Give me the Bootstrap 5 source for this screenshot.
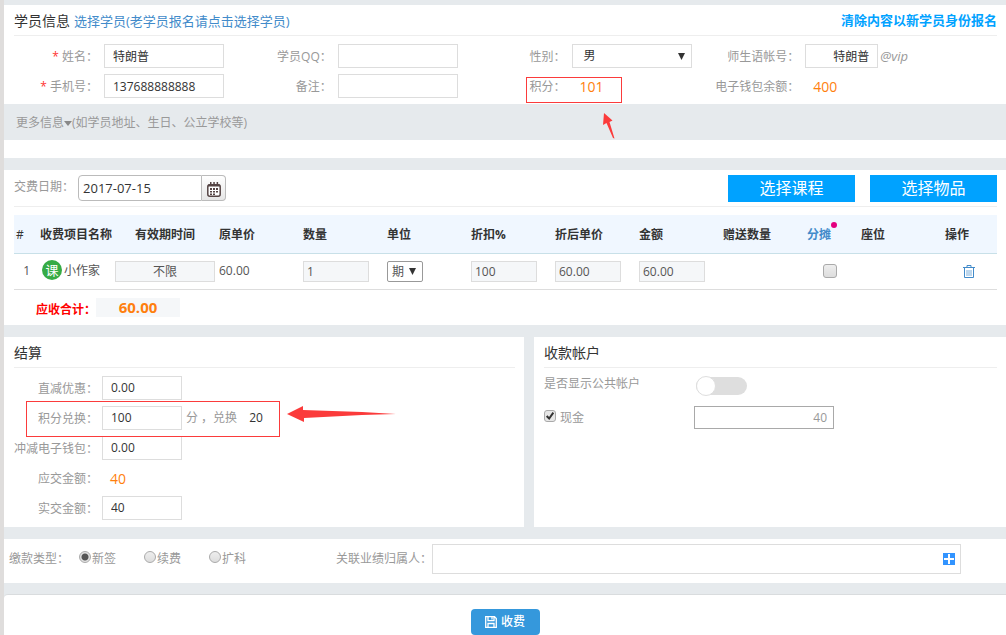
<!DOCTYPE html>
<html lang="zh-CN">
<head>
<meta charset="utf-8">
<meta name="viewport" content="width=device-width, initial-scale=1">
<title>学员收费</title>
<link rel="stylesheet" href="https://cdn.jsdelivr.net/npm/bootstrap@5.3.0/dist/css/bootstrap.min.css">
<style>
  :root { --muted: #999; --line: #ddd; --rule: #eee; --orange: #ff7f0e; --mark-red: #fb3b3b; }
  body { font: 12px/24px "Open Sans", "Noto Sans CJK SC", sans-serif; color: var(--muted); background: #e6eaed; border-left: 4px solid #dfdddc; }
  main { padding-top: 5px; }
  a { text-decoration: none; color: #428bca; }
  .pane { background: #fff; padding: 0 9px 0 10px; }
  .pane-head { height: 31px; border-bottom: 1px solid var(--rule); line-height: 30px; }
  .pane-title { font-size: 14px; line-height: 32px; color: #333; font-weight: 400; margin: 0; }
  .pick { font-size: 13px; line-height: 32px; }
  .reset-link { font-size: 13px; font-weight: 700; color: #00a2ff; }
  .field { display: flex; align-items: flex-start; height: 30px; position: relative; }
  .field > label, .field > .cap { width: 84px; margin-right: 6px; text-align: right; white-space: nowrap; flex: none; line-height: 26px; }
  .req { color: #f33; }
  .box { height: 24px; width: 120px; border: 1px solid var(--line); border-radius: 0; padding: 0 8px; font-size: 12px; line-height: 22px; color: #333; background-color: #fff; }
  .drop { appearance: none; background: #fff url("data:image/svg+xml,%3Csvg xmlns='http://www.w3.org/2000/svg' width='7' height='7'%3E%3Cpath d='M0 0h7L3.5 7z' fill='%23333'/%3E%3C/svg%3E") no-repeat right 6px center; }
  .user-box { width: 73px; }
  .amount { font-size: 14px; line-height: 26px; color: var(--orange); }
  .vip { font-size: 13px; margin-left: 2px; }
  .outline { position: absolute; border: 1px solid var(--mark-red); pointer-events: none; z-index: 2; }
  .pointer { position: absolute; fill: var(--mark-red); z-index: 2; }
  .more { height: 36px; line-height: 38px; padding-left: 12px; }
  .more-body { height: 18px; margin-bottom: 12px; background: #fff; }
  .caret { display: inline-block; border: 4px solid transparent; border-top: 5px solid #888; border-bottom: 0; vertical-align: 1px; }
  .date-row { height: 37px; padding-top: 5px; border-bottom: 1px solid var(--rule); }
  .date-group { width: 148px; height: 26px; }
  .date-group .box { height: 26px; font-size: 13px; padding: 0 4px; border: 1px solid #bbb; border-radius: 4px 0 0 4px; min-width: 0; flex: 1; }
  .date-group button { width: 24px; padding: 3px 0 0; border: 1px solid #bbb; border-left: 0; border-radius: 0 4px 4px 0; background: linear-gradient(#fff, #e6e6e6); line-height: 0; }
  .picks { gap: 15px; }
  .btn-pick { width: 127px; height: 27px; padding: 0; font-size: 16px; line-height: 27px; border: 0; border-radius: 0; background: #00a2ff; color: #fff; }
  .fees { table-layout: fixed; width: 100%; color: #555; }
  .fees th { height: 38px; padding: 2px 4px 0; background: #f0f7ff; border-bottom: 1px solid #c8e0e8; color: #333; font-weight: 700; white-space: nowrap; }
  .fees td { height: 36px; padding: 0 4px; border-bottom: 1px solid var(--line); white-space: nowrap; }
  .fees .box { height: 21px; width: 66px; padding: 0 3px; line-height: 19px; background-color: #f5f7f9; color: #555; display: block; }
  .fees .drop { width: 36px; padding: 0 4px; border-color: #999; border-radius: 2px; background-color: #fff; }
  .fees th.num { padding: 2px 2px 0; font-weight: 400; }
  .fees td.num { padding: 0 6px 0 0; }
  .split { position: relative; }
  .dot { position: absolute; left: 24px; top: -1px; width: 6px; height: 6px; border-radius: 50%; background: #e4007f; }
  .course { display: inline-block; width: 20px; height: 20px; margin: 0 2px; border-radius: 50%; background: #36ab45; color: #fff; font-size: 13px; line-height: 20px; text-align: center; }
  .sum { height: 35px; padding: 8px 0 0 22px; }
  .sum-label { width: 60px; color: #f00; font-weight: 700; }
  .sum-value { width: 84px; background: #f5f7f9; font-size: 15px; font-weight: 700; line-height: 19px; color: var(--orange); text-align: center; }
  .tick { appearance: none; margin: 0; border: 1px solid #aaa; background: linear-gradient(#eee, #ddd) center; flex: none; }
  .tick[type=checkbox] { width: 14px; height: 14px; border-radius: 3px; }
  .tick[type=radio] { width: 12px; height: 12px; border-radius: 50%; }
  .tick[type=checkbox]:checked { width: 12px; height: 12px; background: url("data:image/svg+xml,%3Csvg xmlns='http://www.w3.org/2000/svg' viewBox='0 0 12 12'%3E%3Cpath d='M2 6l3 3 5-7' fill='none' stroke='%23333' stroke-width='2.4'/%3E%3C/svg%3E") center, #e6e6e6; }
  .tick[type=radio]:checked { background: radial-gradient(#555 0 3px, #e2e2e2 4px); }
  .panels { gap: 10px; margin: 12px 0; }
  .panel-left { flex: 522 1 0; height: 190px; }
  .panel-right { flex: 472 1 0; }
  .panel-left .field > label, .panel-left .field > .cap { margin-right: 4px; }
  .panel-left .box { width: 80px; }
  .swap { margin-left: 12px; color: #333; }
  .acct-cap { width: 150px; }
  .acct-row { height: 30px; padding-top: 4px; }
  .toggle { appearance: none; width: 51px; height: 18px; margin: 5px 0 0 2px; border-radius: 9px; position: relative; background: #dedede; }
  .toggle::before { content: ""; position: absolute; left: 0; top: -1px; width: 20px; height: 20px; border: 1px solid #dedede; border-radius: 50%; background: #fff; }
  .acct-box { width: 140px; height: 23px; border-color: #a9a9a9; color: var(--muted); text-align: right; padding: 0 6px; }
  .cash { gap: 4px; }
  .cash .tick { margin-top: 4px; }
  .kinds { height: 44px; padding: 5px 5px 0; margin-bottom: 11px; line-height: 30px; }
  .kind-cap { width: 70px; }
  .kind { width: 65px; gap: 1px; }
  .kind .tick { margin-top: 7px; }
  .owner-cap { margin-left: auto; }
  .owner { width: 529px; height: 30px; margin-right: 40px; border: 1px solid var(--line); }
  .owner input { border: 0; outline: 0; min-width: 0; background: none; }
  .owner button { border: 0; background: none; padding: 0; margin-right: 5px; line-height: 0; }
  .foot { border-top: 1px solid #d9dcde; padding-top: 14px; background: #fff; height: 41px; line-height: 0; border-top-left-radius: 4px; }
  .btn-pay { height: 26px; width: 69px; padding: 0; font-size: 12px; font-weight: 500; line-height: 26px; border: 0; border-radius: 4px; background: #3598dc; color: #fff; }
</style>
</head>
<body>
<main>
  <section class="pane">
    <div class="pane-head d-flex justify-content-between">
      <div class="d-flex gap-1"><h2 class="pane-title">学员信息</h2><a class="pick" href="#">选择学员(老学员报名请点击选择学员)</a></div>
      <a class="reset-link" href="#">清除内容以新学员身份报名</a>
    </div>
    <div class="row row-cols-4 g-0 pt-2 pe-5">
      <div class="field"><label for="name"><span class="req">*</span> 姓名：</label><input class="box" id="name" value="特朗普"></div>
      <div class="field"><label for="qq">学员QQ：</label><input class="box" id="qq"></div>
      <div class="field"><label for="sex">性别：</label><select class="box drop ps-2" id="sex"><option>&nbsp;男</option></select></div>
      <div class="field"><label for="acct">师生语帐号：</label><input class="box user-box text-end" id="acct" value="特朗普"><em class="vip">@vip</em></div>
      <div class="field"><label for="tel"><span class="req">*</span> 手机号：</label><input class="box" id="tel" value="137688888888"></div>
      <div class="field"><label for="memo">备注：</label><input class="box" id="memo"></div>
      <div class="field"><span class="cap">积分：</span><span class="amount ms-2">101</span>
        <span class="outline" style="left:44px;top:3px;width:96px;height:26px"></span>
        <svg class="pointer" style="left:121px;top:39px" width="13" height="27"><path d="M1 0 9.500 7.500 6.500 9 11.500 25.500 10 25 3.500 10 0 12z"/></svg>
      </div>
      <div class="field"><span class="cap">电子钱包余额：</span><span class="amount ms-2">400</span></div>
    </div>
  </section>
  <div class="more">更多信息<span class="caret"></span>(如学员地址、生日、公立学校等)</div>
  <div class="more-body"></div>

  <section class="pane">
    <div class="d-flex align-items-start date-row">
      <label for="date">交费日期：</label>
      <div class="d-flex date-group ms-1"><input class="box" id="date" value="2017-07-15">
        <button type="button" aria-label="选择日期"><svg width="14" height="15" viewBox="0 0 14 15"><rect x=".8" y="2.800" width="12.400" height="11.400" rx="2" fill="#fff" stroke="#544" stroke-width="1.500"/><path d="M1 2.500h12v2H1zM3 0h1.500v3H3zM6.300 0h1.500v3H6.300zM9.600 0h1.500v3H9.600z" fill="#544"/><path d="M3 6h2v2H3zm3 0h2v2H6zm3 0h2v2H9zM3 9h2v1.500H3zm3 0h2v1.500H6zm3 0h2v1.500H9zM3 11.500h2V13H3zm3 0h2V13H6z" fill="#544"/></svg></button>
      </div>
      <div class="d-flex ms-auto picks"><button type="button" class="btn btn-pick">选择课程</button><button type="button" class="btn btn-pick">选择物品</button></div>
    </div>
    <table class="fees mt-2">
      <colgroup><col style="width:22px"><col style="width:75px"><col style="width:104px"><col span="7" style="width:84px"><col style="width:54px"><col style="width:84px"><col style="width:56px"></colgroup>
      <thead><tr><th class="num">#</th><th>收费项目名称</th><th class="text-center pe-0">有效期时间</th><th>原单价</th><th>数量</th><th>单位</th><th>折扣%</th><th>折后单价</th><th>金额</th><th>赠送数量</th><th><a class="split d-block" href="#">分摊<span class="dot"></span></a></th><th>座位</th><th>操作</th></tr></thead>
      <tbody><tr>
        <td class="num text-end">1</td>
        <td><span class="course">课</span>小作家</td>
        <td class="pe-0"><input class="box w-100 text-center" aria-label="有效期时间" value="不限"></td>
        <td>60.00</td>
        <td><input class="box" aria-label="数量" value="1"></td>
        <td><select class="box drop" aria-label="单位"><option>期</option></select></td>
        <td><input class="box" aria-label="折扣" value="100"></td>
        <td><input class="box" aria-label="折后单价" value="60.00"></td>
        <td><input class="box" aria-label="金额" value="60.00"></td>
        <td></td>
        <td><input type="checkbox" class="tick d-block mx-auto" aria-label="分摊"></td>
        <td></td>
        <td class="text-center"><a href="#" aria-label="删除"><svg width="12" height="13" viewBox="0 0 12 13" fill="none" stroke="#428bca"><path d="M0 2.500h12M4 2V.5h4V2M1.500 3v9.500h9V3"/><path d="M4 5v6M6 5v6M8 5v6" stroke-opacity=".7"/></svg></a></td>
      </tr></tbody>
    </table>
    <div class="sum d-flex"><span class="sum-label">应收合计：</span><span class="sum-value align-self-start">60.00</span></div>
  </section>

  <div class="d-flex panels">
    <section class="pane panel-left">
      <div class="pane-head"><h2 class="pane-title">结算</h2></div>
      <div class="pt-2">
        <div class="field"><label for="off">直减优惠：</label><input class="box" id="off" value="0.00"></div>
        <div class="field"><label for="pts">积分兑换：</label><input class="box" id="pts" value="100"><span class="ms-1">分 ，兑换</span><span class="swap">20</span>
          <span class="outline" style="left:12px;top:-5px;width:254px;height:36px"></span>
          <svg class="pointer" style="left:273px;top:0" width="110" height="18"><path d="M0 8 16 0V4L75 6 109 8 75 9 17 12V16z"/></svg>
        </div>
        <div class="field"><label for="wallet">冲减电子钱包：</label><input class="box" id="wallet" value="0.00"></div>
        <div class="field"><span class="cap">应交金额：</span><span class="amount ms-2">40</span></div>
        <div class="field"><label for="paid">实交金额：</label><input class="box" id="paid" value="40"></div>
      </div>
    </section>
    <section class="pane panel-right">
      <div class="pane-head"><h2 class="pane-title">收款帐户</h2></div>
      <div class="d-flex align-items-start acct-row"><label class="acct-cap" for="pub">是否显示公共帐户</label><input class="toggle" type="checkbox" role="switch" id="pub"></div>
      <div class="d-flex align-items-start pt-2">
        <div class="acct-cap d-flex align-items-start cash"><input type="checkbox" class="tick" id="cash" checked><label for="cash">现金</label></div>
        <input class="box acct-box" aria-label="现金金额" value="40">
      </div>
    </section>
  </div>

  <section class="pane d-flex align-items-start kinds">
    <span class="kind-cap">缴款类型：</span>
    <div class="kind d-flex align-items-start"><input class="tick" type="radio" name="k" id="k1" checked><label for="k1">新签</label></div>
    <div class="kind d-flex align-items-start"><input class="tick" type="radio" name="k" id="k2"><label for="k2">续费</label></div>
    <div class="kind d-flex align-items-start"><input class="tick" type="radio" name="k" id="k3"><label for="k3">扩科</label></div>
    <label class="owner-cap" for="owner">关联业绩归属人：</label>
    <div class="owner d-flex align-items-center"><input class="flex-grow-1" id="owner"><button type="button" aria-label="添加"><svg width="12" height="12"><path fill="#3294ff" d="M0 0h12v12H0z"/><path d="M1 6h10M6 1v10" stroke="#fff" stroke-width="2"/></svg></button></div>
  </section>

  <footer class="foot text-center"><button type="button" class="btn btn-pay"><svg class="me-1" width="12" height="12" viewBox="0 0 12 12" fill="none" stroke="#fff" stroke-width="1.300"><path d="M.7.7h8.800l1.800 1.800v8.800H.7zM3 .7v4h6v-4M3 11.300V7.500h6v3.800M7 1v2.500"/></svg>收费</button></footer>
</main>
<script src="https://cdn.jsdelivr.net/npm/bootstrap@5.3.0/dist/js/bootstrap.bundle.min.js"></script>
</body>
</html>
